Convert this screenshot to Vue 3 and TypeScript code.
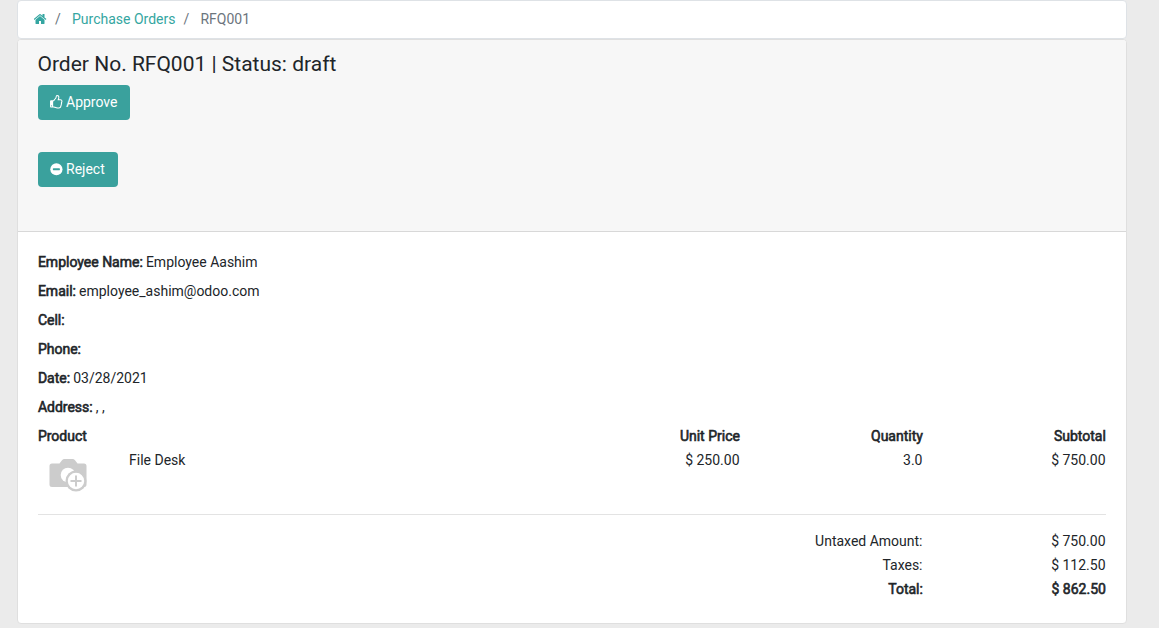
<script setup lang="ts">
interface Field {
  label: string
  value: string
}

interface OrderLine {
  name: string
  price: string
  quantity: string
  subtotal: string
}

interface Total extends Field {
  strong?: boolean
}

const fields: Field[] = [
  { label: 'Employee Name:', value: 'Employee Aashim' },
  { label: 'Email:', value: 'employee_ashim@odoo.com' },
  { label: 'Cell:', value: '' },
  { label: 'Phone:', value: '' },
  { label: 'Date:', value: '03/28/2021' },
  { label: 'Address:', value: ', ,' },
]

const lines: OrderLine[] = [
  { name: 'File Desk', price: '$ 250.00', quantity: '3.0', subtotal: '$ 750.00' },
]

const totals: Total[] = [
  { label: 'Untaxed Amount:', value: '$ 750.00' },
  { label: 'Taxes:', value: '$ 112.50' },
  { label: 'Total:', value: '$ 862.50', strong: true },
]
</script>

<template>
  <main class="page">
    <nav class="crumbs">
      <a class="home" aria-label="Home">
        <svg viewBox="64 0 1664 1792" width="13" height="14" fill="currentColor">
          <path d="M1408 992v480q0 26-19 45t-45 19h-384v-384h-256v384h-384q-26 0-45-19t-19-45v-480q0-1 .5-3t.5-3l575-474 575 474q1 2 1 6zm223-69l-62 74q-8 9-21 11h-3q-13 0-21-7l-692-577-692 577q-12 8-24 7-13-2-21-11l-62-74q-8-10-7-23.5t11-21.5l719-599q32-26 76-26t76 26l244 204v-195q0-14 9-23t23-9h192q14 0 23 9t9 23v408l219 182q10 8 11 21.5t-7 23.5z" />
        </svg>
      </a>
      <span class="slash">/</span>
      <a>Purchase Orders</a>
      <span class="slash">/</span>
      <span class="current">RFQ001</span>
    </nav>

    <section class="card">
      <header class="card-header">
        <h1>Order No. RFQ001 | Status: draft</h1>
        <button class="btn" type="button">
          <svg viewBox="128 0 1536 1792" width="12.5" height="14.5" fill="currentColor">
            <path d="M384 1344q0-26-19-45t-45-19-45 19-19 45 19 45 45 19 45-19 19-45zm1152-576q0-51-39-89.5t-89-38.5h-352q0-58 48-159.5t48-160.5q0-98-32-145t-128-47q-26 26-38 85t-30.5 125.5-59.5 109.5q-22 23-77 91-4 5-23 30t-31.5 41-34.5 42.5-40 44-38.5 35.5-40 27-35.5 9h-32v640h32q13 0 31.5 3t33 6.5 38 11 35 11.5 35.5 12.5 29 10.5q211 73 342 73h121q192 0 192-167 0-26-5-56 30-16 47.5-52.5t17.5-73.5-18-69q53-50 53-119 0-25-10-55.5t-25-47.5q32-1 53.5-47t21.5-81zm128-1q0 89-49 163 9 33 9 69 0 77-38 144 3 21 3 43 0 101-60 178 1 139-85 219.5t-227 80.5h-129q-96 0-189.5-22.5t-216.5-65.5q-116-40-138-40h-288q-53 0-90.5-37.5t-37.5-90.5v-640q0-53 37.5-90.5t90.5-37.5h274q36-24 137-155 58-75 107-128 24-25 35.5-85.5t30.5-126.5 62-108q39-37 90-37 84 0 151 32.5t102 101.5 35 186q0 93-48 192h176q104 0 180 76t76 179z" />
          </svg>
          <span>Approve</span>
        </button>
        <button class="btn" type="button">
          <svg viewBox="0 0 12.5 14.5" width="12.5" height="14.5">
            <circle cx="6.4" cy="7.25" r="6.1" fill="currentColor" />
            <rect class="minus" x="2.9" y="6.25" width="7" height="2" rx="0.4" />
          </svg>
          <span>Reject</span>
        </button>
      </header>

      <div class="card-body">
        <p v-for="field in fields" :key="field.label" class="field">
          <b>{{ field.label }}</b> {{ field.value }}
        </p>

        <div class="row head">
          <b>Product</b>
          <span></span>
          <b>Unit Price</b>
          <b>Quantity</b>
          <b>Subtotal</b>
        </div>
        <div v-for="line in lines" :key="line.name" class="row line">
          <svg class="thumb" viewBox="0 0 38 33" width="38" height="33">
            <path fill="#ccc" d="M3 4.5h7.5L13 1.2Q14 0 15.500 0h8q1.500 0 2.500 1.200l2.500 3.300H35q2.500 0 2.500 2.500v18.500q0 2.500-2.500 2.500H3Q.5 28 .5 25.500V7Q.5 4.500 3 4.500z" />
            <circle cx="19" cy="16" r="7.300" fill="#fff" />
            <circle cx="27" cy="22" r="10.500" fill="#ccc" />
            <circle cx="27" cy="22" r="9.100" fill="#fff" stroke="#ccc" stroke-width="1.800" />
            <path fill="none" stroke="#ccc" stroke-width="2" d="M27 16.500v11M21.500 22h11" />
          </svg>
          <span class="name">{{ line.name }}</span>
          <span>{{ line.price }}</span>
          <span>{{ line.quantity }}</span>
          <span>{{ line.subtotal }}</span>
        </div>

        <hr />

        <div v-for="total in totals" :key="total.label" class="total" :class="{ strong: total.strong }">
          <span>{{ total.label }}</span>
          <span>{{ total.value }}</span>
        </div>
      </div>
    </section>
  </main>
</template>

<style>
body {
  background: #ebebeb;
}
</style>

<style scoped>
* {
  box-sizing: border-box;
}

.page {
  width: 1110px;
  height: 628px;
  margin-left: 16.5px;
  font: 14px/21px Roboto, "Noto Sans", sans-serif;
  color: #212529;
}

.crumbs {
  display: flex;
  align-items: center;
  height: 39px;
  padding: 0 16px 0 16.5px;
  background: #fff;
  border: 1px solid #dee2e6;
  border-radius: 4px;
}

.crumbs a {
  color: #35a6a1;
}

.home {
  display: flex;
  padding-bottom: 1px;
}

.slash {
  width: 5px;
  margin: 0 12px 0 8px;
  color: #6c757d;
}

.current {
  color: #6c757d;
}

.card {
  height: 585px;
  background: #fff;
  border: 1px solid #dfdfdf;
  border-radius: 4px;
}

.card-header {
  display: flex;
  flex-direction: column;
  align-items: flex-start;
  height: 192px;
  padding: 12px 20px 0;
  background: #f7f7f7;
  border-bottom: 1px solid #d8d8d8;
  border-radius: 3px 3px 0 0;
}

h1 {
  margin: 0 0 8px;
  font-size: 21px;
  font-weight: 400;
  line-height: 25px;
}

.btn {
  display: flex;
  align-items: center;
  gap: 3.5px;
  height: 35px;
  margin: 0 0 32px;
  padding: 0 13px 0 12.5px;
  font: inherit;
  color: #fff;
  background: #3aa19d;
  border: 0;
  border-radius: 4px;
}

.btn svg {
  margin-bottom: 1px;
}

.minus {
  fill: #3aa19d;
}

.card-body {
  padding: 20px 20px 0;
}

.field {
  height: 21px;
  margin: 0 0 8px;
}

/* Labels thicken the regular face, keeping its advance widths. */
b,
.strong {
  margin-right: -0.4px;
  padding-left: 0.4px;
  font-weight: 400;
  -webkit-text-stroke: 0.6px currentColor;
}

.row {
  display: grid;
  grid-template-columns: 91.5px 427.5px 183px 183px 183px;
  text-align: right;
}

.row > :first-child,
.row > :nth-child(2) {
  text-align: left;
}

.head {
  height: 24px;
}

.line {
  height: 64px;
}

.thumb {
  margin: 9px 0 0 11.5px;
}

hr {
  height: 1px;
  margin: 0 0 16px;
  background: #e3e3e3;
  border: 0;
}

.total {
  display: grid;
  grid-template-columns: 885px 183px;
  height: 24px;
  text-align: right;
}
</style>
